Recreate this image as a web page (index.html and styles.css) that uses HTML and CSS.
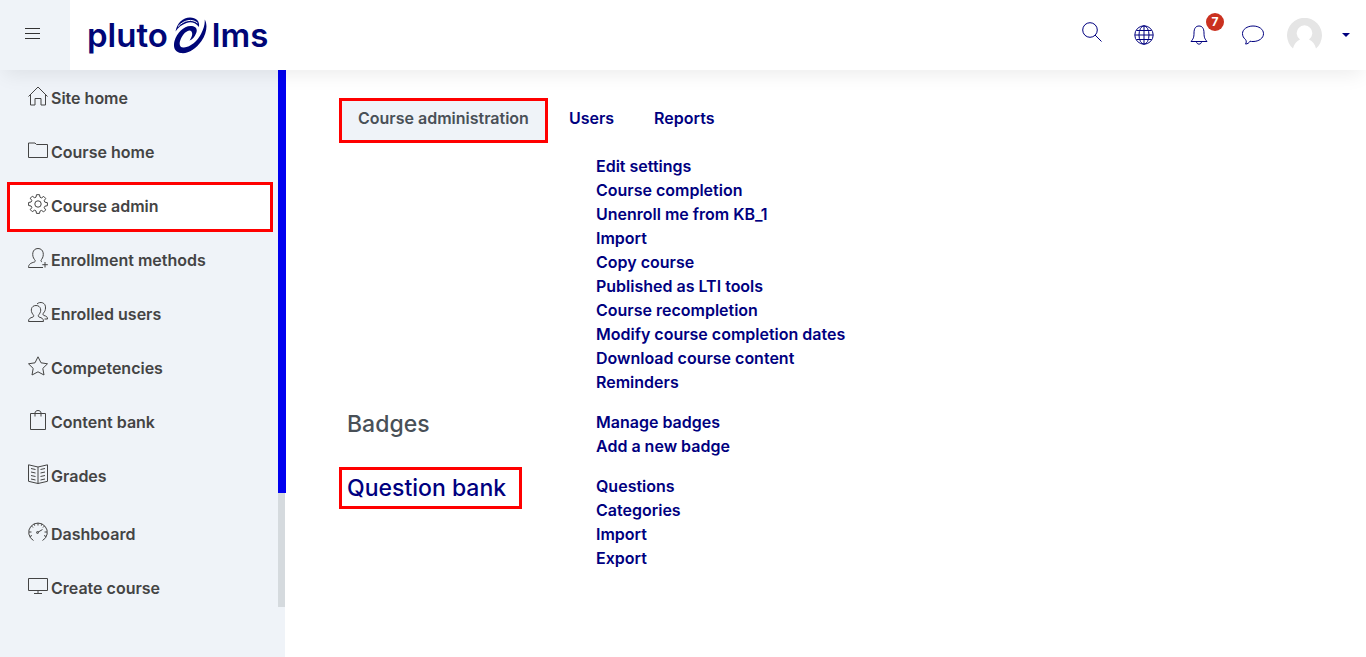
FILE: index.html
```
<!DOCTYPE html>
<html lang="en">
<head>
    <meta charset="UTF-8">
    <meta name="viewport" content="width=device-width, initial-scale=1.0">
    <title>Course administration</title>
    <link rel="stylesheet" href="styles.css">
</head>
<body>
    <header class="topbar">
        <button class="menu-toggle" type="button" aria-label="Toggle menu">
            <svg width="15" height="13" viewBox="0 0 15 13"><path d="M0 1.5h15M0 6.5h15M0 11.5h15"/></svg>
        </button>
        <a class="logo" href="#" aria-label="pluto lms">
            <span>pluto</span>
            <svg class="logo-mark" width="34" height="38" viewBox="0 0 34 38">
                <path class="fill" d="M2.500 15.500C4 7 10 1.500 17 1.500C23 1.500 27 5 26 11C22 6.500 18 5.500 13.500 7C9 8.500 5 11.500 2.500 15.500Z"/>
                <path class="fill" d="M31.700 3.500C35 9 33.500 18 28.500 25C23 33 15 38 8 37C1.500 36 0 31 1.500 25C4 17 10.500 10 17.500 10C23 10 25 13 23 17.500C21.500 21 19.500 23.500 16.500 24.500C19 21 20 18 18.500 15.500C16 12.500 10.500 17 8 22.500C5.500 28 6.500 32 11 31.500C17.500 31 24.500 25 28 18C31 12 32 8 31.700 3.500Z"/>
                <path d="M5 10.500C11 4 19 2.500 24.500 7"/>
            </svg>
            <span>lms</span>
        </a>
        <div class="tools">
            <button class="tool search" type="button" aria-label="Search">
                <svg width="20" height="20" viewBox="0 0 20 20"><circle cx="8" cy="8" r="7.3"/><path d="M13 13l6.5 6.5"/></svg>
            </button>
            <button class="tool" type="button" aria-label="Language">
                <svg width="20" height="20" viewBox="0 0 20 20"><circle cx="10" cy="10" r="9.2"/><ellipse cx="10" cy="10" rx="5" ry="9.2"/><path d="M10 1v18M1 10h18M2.5 5.5h15M2.5 14.5h15"/></svg>
            </button>
            <button class="tool bell" type="button" aria-label="Notifications">
                <svg width="18" height="20" viewBox="0 0 18 20"><path d="M1 16.5C3 14 4 13 4 8C4 3 6 1 9 1s5 2 5 7c0 5 1 6 3 8.500ZM6.500 16.500c0 3.500 5 3.500 5 0"/></svg>
                <span class="badge">7</span>
            </button>
            <button class="tool" type="button" aria-label="Messages">
                <svg width="24" height="20" viewBox="0 0 24 20"><path d="M4.500 14.500C2.500 13 1.500 11 1.500 8.500C1.500 4.500 6 1 12 1s10.500 3.300 10.500 7.700S18 16.500 12 16.500c-1 0-2 0-3-.3C8 18 6.500 19 4.500 19c.8-1 1.200-3 0-4.500Z"/></svg>
            </button>
            <button class="user" type="button" aria-label="User menu">
                <svg class="avatar" width="35" height="35" viewBox="0 0 35 35">
                    <path d="M6 30.500A17.500 17.500 0 1 1 29 30.500C28 26 25.500 23 22 21.500a7.800 7.800 0 1 0-9 0C9.500 23 7 26 6 30.500Z"/>
                </svg>
                <svg class="caret" width="8" height="4" viewBox="0 0 8 4"><path d="M0 0h8L4 4Z"/></svg>
            </button>
        </div>
    </header>

    <div class="page">
        <aside class="sidebar">
            <nav class="side-nav">
                <a class="side-link" href="#">
                    <svg class="icon" viewBox="0 0 20 20"><path d="M.5 10.500L10 1l9.500 9.500M2.500 9v10h4.500v-6.500h6V19h4.500V9"/></svg>
                    Site home
                </a>
                <a class="side-link" href="#">
                    <svg class="icon" viewBox="0 0 20 20"><path d="M.5 17.500v-14.500h6.500l1.500 1.500h11v13Z"/></svg>
                    Course home
                </a>
                <a class="side-link active" href="#">
                    <svg class="icon" viewBox="0 0 20 20"><path d="M8.500.7h3l.5 2.500 1.500.7 2.200-1.500 2 2-1.500 2.300.7 1.500 2.500.5v3l-2.500.5-.7 1.500 1.500 2.200-2 2-2.200-1.500-1.500.7-.5 2.300h-3L8 16.900l-1.500-.7-2.200 1.500-2-2 1.500-2.200-.7-1.500-2.500-.5v-3l2.500-.5.7-1.500-1.500-2.300 2-2 2.200 1.500L8 3.200Z"/><circle cx="10" cy="10" r="3.200"/></svg>
                    Course admin
                </a>
                <a class="side-link" href="#">
                    <svg class="icon" viewBox="0 0 20 20"><path d="M15 19.500H.5C.5 16 3 15 6.500 14c1-.5 1-1.500 0-2.500C3.500 8 4 .5 10 .5s6.500 7.500 3.500 11c-1 1-.5 2 .5 2.500M17 14v5.500M14.300 16.700h5.500"/></svg>
                    Enrollment methods
                </a>
                <a class="side-link" href="#">
                    <svg class="icon" viewBox="0 0 20 20"><path d="M.5 19.500C.5 16.500 2 16 5 15c1-.5 1-1.500 0-2.500C2 9 3 3.500 8 3.500S14 9 11 12.500c-1 1-1 2 0 2.500 3 1 4.500 1.500 4.500 4.500ZM9 2c3-3 9-1.500 8.500 4 0 2-.7 3.500-2 5-.8 1-.7 2 .5 2.500 2.500.7 3.500 1.300 3.500 3.500h-3"/></svg>
                    Enrolled users
                </a>
                <a class="side-link" href="#">
                    <svg class="icon" viewBox="0 0 20 20"><path d="M10 .8l3 6 6.500 1-4.700 4.600L16 19l-6-3.200L4 19l1.200-6.600L.5 7.800l6.500-1Z"/></svg>
                    Competencies
                </a>
                <a class="side-link" href="#">
                    <svg class="icon" viewBox="0 0 20 20"><path d="M2.500 3.500h15v16h-15ZM7 6.500V3c0-3.300 6-3.300 6 0v3.500"/></svg>
                    Content bank
                </a>
                <a class="side-link" href="#">
                    <svg class="icon" viewBox="0 0 20 20"><path d="M10 3L.5.8v16.500l9.500 2.200 9.500-2.200V.8ZM10 3v16.500M3 4.500l4.500 1M3 8l4.500 1M3 11.500l4.500 1M3 15l4.500 1M17 4.500l-4.500 1M17 8l-4.500 1M17 11.500l-4.500 1M17 15l-4.500 1"/></svg>
                    Grades
                </a>
                <a class="side-link second-group" href="#">
                    <svg class="icon" viewBox="0 0 20 20"><path d="M5.500 18.500A9.300 9.300 0 1 1 14.500 18.500M10 1v2.500M1 10h2.500M16.500 10H19M3.500 4l1.500 1.500M16.500 4L15 5.500M6 2l.7 1.700M14 2l-.7 1.700M2 14.500l2-1M18 14.500l-2-1M9.500 10.500l5-3"/><circle cx="9.500" cy="10.500" r="1"/></svg>
                    Dashboard
                </a>
                <a class="side-link" href="#">
                    <svg class="icon" viewBox="0 0 20 20"><path d="M.5 2.500h19v12H.5ZM10 14.500v3M6 17.500h8"/></svg>
                    Create course
                </a>
            </nav>
            <div class="rail"><div class="thumb"></div></div>
        </aside>

        <main class="content">
            <nav class="tabs">
                <a class="tab active" href="#">Course administration</a>
                <a class="tab" href="#">Users</a>
                <a class="tab" href="#">Reports</a>
            </nav>

            <section class="group">
                <ul class="links">
                    <li><a href="#">Edit settings</a></li>
                    <li><a href="#">Course completion</a></li>
                    <li><a href="#">Unenroll me from KB_1</a></li>
                    <li><a href="#">Import</a></li>
                    <li><a href="#">Copy course</a></li>
                    <li><a href="#">Published as LTI tools</a></li>
                    <li><a href="#">Course recompletion</a></li>
                    <li><a href="#">Modify course completion dates</a></li>
                    <li><a href="#">Download course content</a></li>
                    <li><a href="#">Reminders</a></li>
                </ul>
            </section>
            <section class="group">
                <h2 class="group-title">Badges</h2>
                <ul class="links">
                    <li><a href="#">Manage badges</a></li>
                    <li><a href="#">Add a new badge</a></li>
                </ul>
            </section>
            <section class="group">
                <h2 class="group-title marked"><a href="#">Question bank</a></h2>
                <ul class="links">
                    <li><a href="#">Questions</a></li>
                    <li><a href="#">Categories</a></li>
                    <li><a href="#">Import</a></li>
                    <li><a href="#">Export</a></li>
                </ul>
            </section>
        </main>
    </div>
</body>
</html>
```
FILE: styles.css
```
* {
    box-sizing: border-box;
}
body {
    margin: 0;
    min-height: 100vh;
    display: flex;
    flex-direction: column;
    background: #fff;
    color: #495057;
    font-family: Inter, 'Liberation Sans', sans-serif;
    font-size: 16px;
    font-weight: 600;
    line-height: 24px;
}
a {
    color: #00007f;
    text-decoration: none;
}
button {
    border: 0;
    padding: 0;
    background: none;
    font: inherit;
    cursor: pointer;
}
svg {
    display: block;
    fill: none;
    stroke: currentColor;
}

/* header */
.topbar {
    position: relative;
    z-index: 1;
    display: flex;
    align-items: center;
    height: 70px;
    padding-right: 16px;
    background: #fff;
    box-shadow: 0 8px 20px -4px rgba(0, 0, 0, 0.08);
}
.menu-toggle {
    align-self: stretch;
    width: 70px;
    padding: 0 0 4px 25px;
    background: #eff3f8;
    color: #333;
}
.logo {
    display: flex;
    align-items: center;
    gap: 5px;
    margin-left: 17px;
    color: #000677;
    font-size: 33px;
    font-weight: 600;
    line-height: 40px;
}
.logo-mark {
    stroke: #fff;
    stroke-width: 1;
}
.logo-mark .fill {
    fill: #000677;
    stroke: none;
}
.tools {
    display: flex;
    align-items: center;
    gap: 32px;
    margin-left: auto;
    color: #00007f;
}
.tool {
    position: relative;
    color: #00007f;
}
.search {
    padding-bottom: 6px;
}
.bell {
    margin: 0 1px 0 4px;
}
.badge {
    position: absolute;
    top: -12px;
    left: 16px;
    width: 18px;
    height: 18px;
    border-radius: 50%;
    background: #ca3120;
    color: #fff;
    font-size: 12px;
    font-weight: 700;
    line-height: 18px;
}
.user {
    display: flex;
    align-items: center;
    gap: 20px;
    margin-left: -10px;
    color: #00007f;
}
.avatar {
    fill: #e5e5e5;
    stroke: none;
}
.caret {
    fill: #00007f;
    stroke: none;
}

/* sidebar */
.page {
    flex: 1;
    display: flex;
}
.sidebar {
    flex: none;
    display: flex;
    width: 285px;
    background: #eff3f8;
}
.side-nav {
    flex: 1;
    display: flex;
    flex-direction: column;
    gap: 4px;
    padding: 4px 5px 0 7px;
}
.side-link {
    display: flex;
    align-items: center;
    gap: 3px;
    height: 50px;
    padding: 0 0 2px 18px;
    border: 3px solid transparent;
    color: #444;
}
.side-link.active {
    border-color: #f00;
    background: #fff;
}
.second-group {
    margin-top: 4px;
}
.icon {
    width: 20px;
    height: 20px;
    margin-bottom: 4px;
}
.rail {
    width: 7px;
    height: 537px;
    background: #d5dade;
}
.thumb {
    width: 8px;
    height: 423px;
    background: #0000f0;
}

/* content */
.content {
    flex: 1;
    padding: 28px 23px 28px 54px;
}
.tabs {
    display: flex;
    gap: 2px;
    margin-bottom: 11px;
}
.tab {
    height: 45px;
    padding: 5px 16px;
    border: 3px solid transparent;
}
.tab.active {
    border-color: #f00;
    background: #eff3f8;
    color: #495057;
}
.group {
    display: grid;
    grid-template-columns: 1fr 3fr;
    align-items: start;
    margin: 0 0 16px 8px;
}
.group-title {
    justify-self: start;
    margin: 1px 0 0;
    padding-right: 8px;
    font-size: 23px;
    font-weight: 500;
    line-height: 26px;
}
.marked {
    outline: 3px solid #f00;
    outline-offset: 5px;
}
.links {
    grid-column: 2;
    margin: 0;
    padding: 0;
    list-style: none;
}
```
